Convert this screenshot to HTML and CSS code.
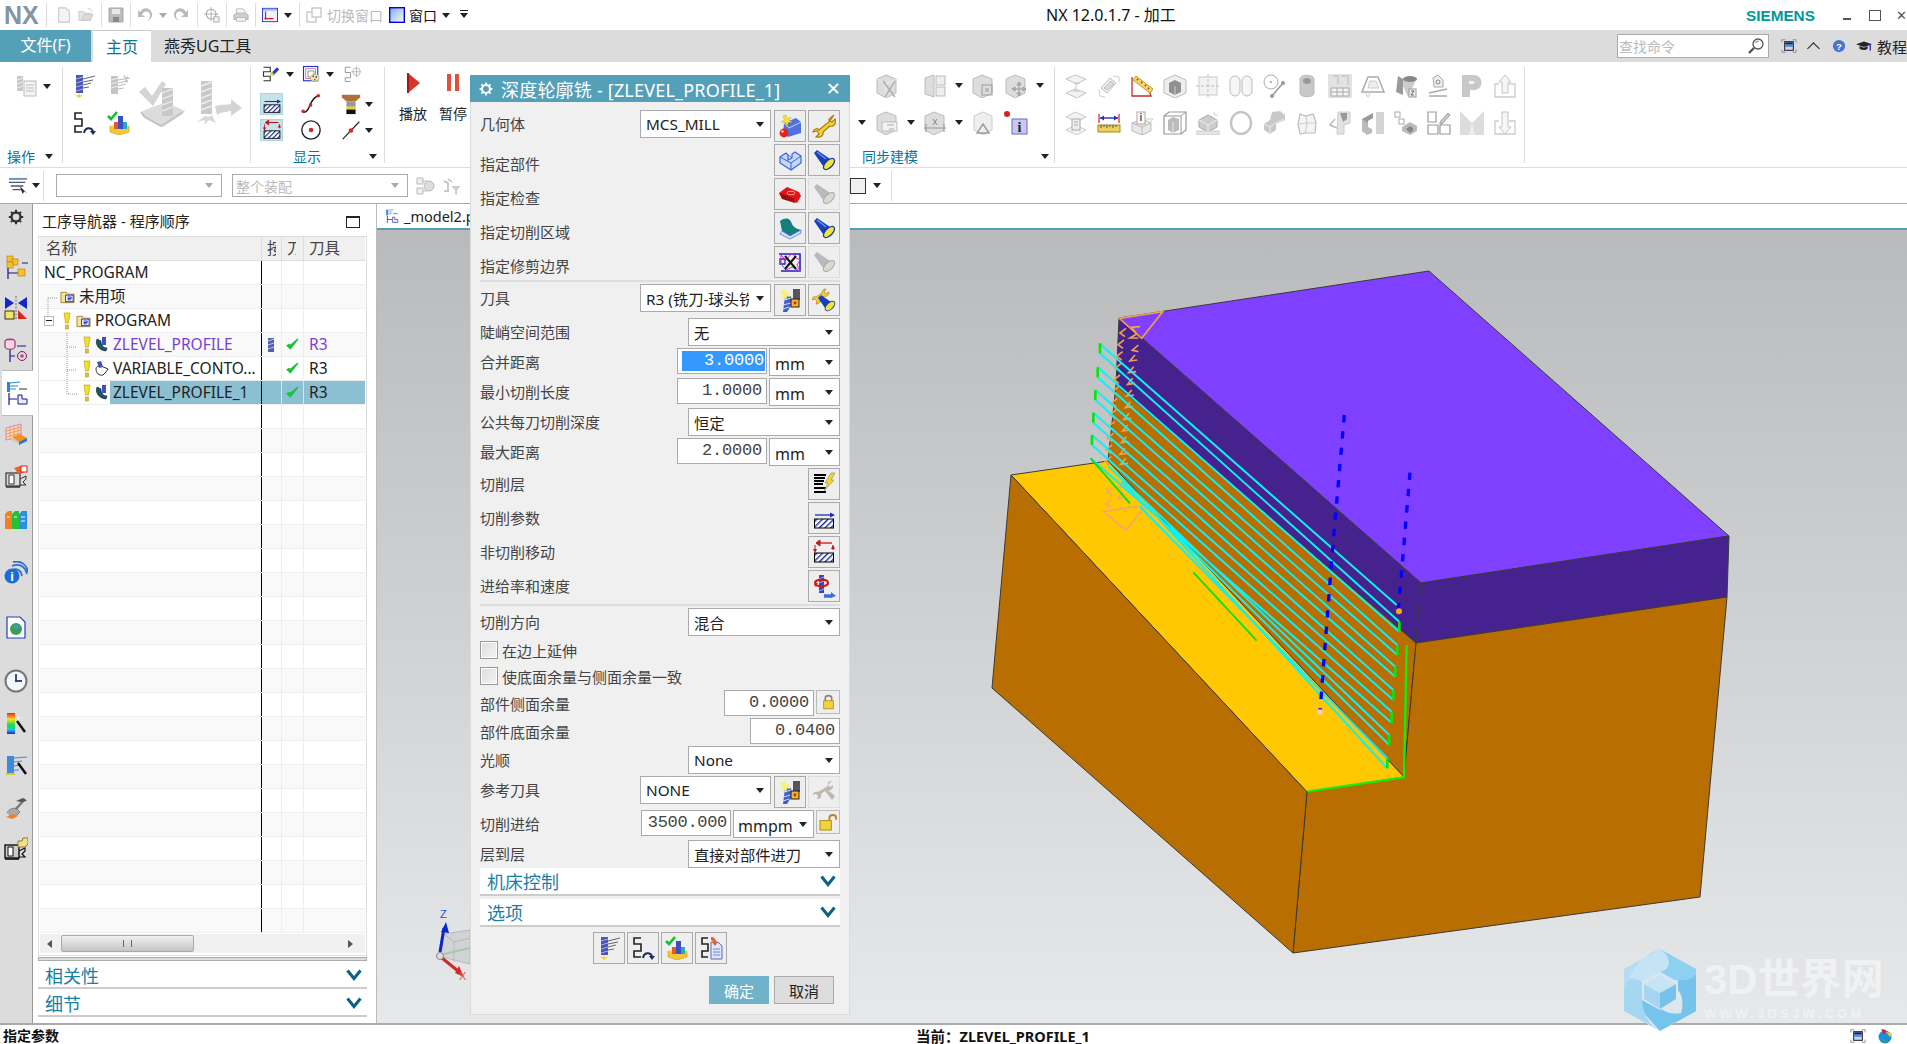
FILE: index.html
```html
<!DOCTYPE html>
<html lang="zh-CN">
<head>
<meta charset="utf-8">
<title>NX 12.0.1.7 - 加工</title>
<link rel="stylesheet" href="styles.css">
</head>
<body>
<svg class="defs" width="0" height="0" aria-hidden="true">
<defs>
<pattern id="hatch" width="4" height="4" patternUnits="userSpaceOnUse" patternTransform="rotate(45)"><rect width="4" height="4" fill="#fff"/><rect width="1.4" height="4" fill="#1c2a8c"/></pattern>
<symbol id="op" viewBox="0 0 24 24"><rect x="4" y="1" width="7" height="18" fill="#4a55b8"/><path d="M4 5l7-2M4 9l7-2M4 13l7-2M4 17l7-2" stroke="#a8b0f0"/><path d="M11 5L23 2M11 8l10-2M11 11l8-2M11 14l6-1" stroke="#666" fill="none"/><path d="M7 19l1.2 2.5L11 20l-1.7 2.4L7 24l-2-1.6L3 20l2.8 1.5z" fill="#f3d23a"/></symbol>
<symbol id="op-g" viewBox="0 0 24 24"><rect x="4" y="2" width="7" height="18" fill="#c4c4c4"/><path d="M4 6l7-2M4 10l7-2M4 14l7-2" stroke="#eee"/><path d="M11 6L23 4M11 9l10-2M11 12l8-2M11 15l6-1" stroke="#bbb"/><path d="M17 1l1 3 3-1-2 3 2 2-3-1" fill="#ddd" stroke="#bbb"/></symbol>
<symbol id="sarrow" viewBox="0 0 24 24"><path d="M10 2H3v6h7v7H3v6h7" fill="none" stroke="#222" stroke-width="1.6"/><path d="M12 22c1-6 7-6 9-2" fill="none" stroke="#1b2a5c" stroke-width="2"/><path d="M18 20h6l-3 4z" fill="#1b2a5c"/></symbol>
<symbol id="verify" viewBox="0 0 24 24"><path d="M3 15l9 4 10-4v6l-10 3-9-3z" fill="#f5c833" stroke="#c49a10" stroke-width=".6"/><path d="M3 15l9-3 10 3-10 4z" fill="#f8dc70"/><rect x="7" y="11" width="4" height="7" fill="#e35a2a"/><rect x="11" y="5" width="5" height="13" fill="#3a50c0"/><rect x="16" y="11" width="4" height="7" fill="#25a8c0"/><path d="M1 5l3 3 6-7" fill="none" stroke="#12c030" stroke-width="2.6"/></symbol>
<symbol id="copy" viewBox="0 0 24 24"><path d="M9 2H3v6h6v7H3v6h6" fill="none" stroke="#222" stroke-width="1.6"/><path d="M12 6h7l4 4v13H12z" fill="#dfe6fa" stroke="#5a6ab8"/><path d="M14 13h7M14 16h7M14 19h7" stroke="#7484c8"/><path d="M12 1c3 0 5 2 5 5h2l-3 4-3-4h1c0-1-1-2-2-2z" fill="#e8622a"/></symbol>
<symbol id="flash" viewBox="0 0 24 24"><path d="M2 5l3-3 13 9-7 7z" fill="#1a3fb8"/><path d="M5 4l9 7" stroke="#6f8ff0" stroke-width="1.5"/><ellipse cx="17" cy="16" rx="7" ry="3.6" transform="rotate(-45 17 16)" fill="#f2e23a" stroke="#123a9a" stroke-width="1.2"/></symbol>
<symbol id="flash-g" viewBox="0 0 24 24"><path d="M2 5l3-3 13 9-7 7z" fill="#b9b9be"/><ellipse cx="17" cy="16" rx="7" ry="3.6" transform="rotate(-45 17 16)" fill="#d9dbd0" stroke="#aaa"/></symbol>
<symbol id="geom" viewBox="0 0 24 24"><path d="M6 9l12-5 5 4v11l-13 4-5-4z" fill="#4f72e0"/><path d="M6 9l5 5 12-6" fill="none" stroke="#c7d6ff"/><path d="M8 1l1.5 4L13 3l-2 3.500 3 1.500-4 .5L9 13 7.500 8.500 3 8l3.500-2L5 2z" fill="#f7e33c" stroke="#d8a520" stroke-width=".5"/><circle cx="6" cy="19" r="4.400" fill="#e82018"/><circle cx="4.500" cy="17.500" r="1.200" fill="#ffd0b0"/></symbol>
<symbol id="wrench" viewBox="0 0 24 24"><path d="M22 1l-5 4v3l-3 2-7 6c-1-2-5-2-6 2l4-1 2 3-3 3c5 1 8-2 7-5l7-6c3 1 7-2 5-7l-3 3-2-1z" fill="#f5cf3a" stroke="#a9820d" stroke-width="1.200"/></symbol>
<symbol id="wrench-g" viewBox="0 0 24 24"><path d="M20 1c-3 0-5 2-4 5L6 12c-3-1-5 1-5 3l3-1 2 2-1 3c3 0 5-2 4-5l4-3 7 9 3-4-7-6c2 1 6-1 5-5l-3 2-2-2z" fill="#bdb9ae"/></symbol>
<symbol id="partcube" viewBox="0 0 24 24"><path d="M2 9l6-4 2 2v5l4-2V6l3-2 6 4v7l-10 7-11-7z" fill="#c5d6ff" stroke="#3a64d8" stroke-width="1.200"/><path d="M2 9l11 6 10-7M13 15v7M10 7l4 3" fill="none" stroke="#3a64d8"/></symbol>
<symbol id="checkred" viewBox="0 0 24 24"><path d="M1 11l8-6 12 5 2 4-4 7-13-4z" fill="#e5141a"/><path d="M1 11l3 6 13 4-1-5z" fill="#9c0e10"/><ellipse cx="13" cy="11" rx="4" ry="1.800" fill="none" stroke="#ffa0a0"/></symbol>
<symbol id="area" viewBox="0 0 24 24"><path d="M4 15L2 5c6-4 10-3 12 3 1 3 5 5 9 6l-11 6z" fill="#157f80"/><path d="M4 15l8 5 11-6v3l-11 6-10-5z" fill="#d8e0f8" stroke="#3a64d8" stroke-width=".7"/></symbol>
<symbol id="trim" viewBox="0 0 24 24"><path d="M1 4h21v17H3" fill="none" stroke="#1426c0" stroke-width="1.600"/><path d="M2 9h5v5H2z" fill="none" stroke="#1426c0" stroke-width="1.300"/><path d="M3 5l5 5 6-7 4 5 4 2-3 5 3 6-8-4-6 3-5-6z" fill="none" stroke="#e020d8"/><path d="M7 6l11 13M18 6L7 19" stroke="#111" stroke-width="2"/></symbol>
<symbol id="toolnew" viewBox="0 0 24 24"><path d="M7 8h6l1 8-5 8H5z" fill="#3f5fd0"/><path d="M5 12l9-2M5 17l8-2M5 21l6-2" stroke="#cfd8ff"/><rect x="15" y="1" width="7" height="11" fill="#55555f"/><rect x="13" y="11" width="8" height="8" fill="#f5b32a" stroke="#222"/><circle cx="17" cy="15" r="1.400" fill="#b31"/><path d="M7 1l1.500 4 4-1.500-2.500 3.500 3 2-4-.5L8 13 6.500 9 2 9.500 5 7 3 3z" fill="#fdf06a"/></symbol>
<symbol id="tooledit" viewBox="0 0 24 24"><path d="M14 1c-3 0-4 2-4 4L4 9C1 8 0 10 0 12l3-1 2 2-1 3c3 0 5-2 4-5l4-3c2 1 5 0 5-4l-3 2-2-2z" fill="#f5cf3a" stroke="#a9820d" stroke-width=".7"/><path d="M6 10l3-3 10 7-6 6z" fill="#1a3fb8"/><ellipse cx="18" cy="18" rx="6" ry="3.200" transform="rotate(-45 18 18)" fill="#f2e23a" stroke="#123a9a"/></symbol>
<symbol id="layers" viewBox="0 0 24 24"><path d="M2 3h12M2 6h11M2 9h10M2 12h9M2 16h12M2 20h12" stroke="#000" stroke-width="2"/><path d="M19 1h4l-4 7h3L12 19l4-8h-3z" fill="#f0d43a" stroke="#8a8a50" stroke-width=".6"/></symbol>
<symbol id="cutparam" viewBox="0 0 24 24"><path d="M3 9h17" stroke="#1c2ac0" stroke-width="1.300"/><path d="M23 9l-5-2.500v5z" fill="#1c2ac0"/><rect x="2.500" y="13" width="19" height="9" fill="url(#hatch)" stroke="#000"/></symbol>
<symbol id="noncut" viewBox="0 0 24 24"><path d="M5 3h15" stroke="#c01818" stroke-width="1.300"/><path d="M8 0v6l-4-3zM3 5v5M21 5v5" stroke="#c01818" fill="#c01818"/><path d="M1 9h4l-2 4zM19 9h4l-2-4z" fill="#c01818"/><rect x="2.500" y="13" width="19" height="9" fill="url(#hatch)" stroke="#000"/></symbol>
<symbol id="feed" viewBox="0 0 24 24"><rect x="7" y="1" width="5" height="18" fill="#3a46b8"/><path d="M7 5l5-2M7 9l5-2M7 13l5-2M7 17l5-2" stroke="#9aa6ee"/><path d="M3 9c0-4 13-5 13 0 0 4-11 4-13 1" fill="none" stroke="#d01818" stroke-width="2.200"/><path d="M2 8l4 1-3 4z" fill="#d01818"/><path d="M12 22h8" stroke="#3a6ee0" stroke-width="3.500"/><path d="M19 18l5 4-5 2z" fill="#3a6ee0"/></symbol>
<symbol id="lock" viewBox="0 0 16 20"><path d="M4 9V5c0-4 8-4 8 0v4" fill="none" stroke="#8c8470" stroke-width="2"/><rect x="2" y="8.500" width="12" height="10" fill="#f3d23a" stroke="#a88a1a"/></symbol>
<symbol id="unlock" viewBox="0 0 20 18"><path d="M11 7V4c0-4 7-4 7 0v2" fill="none" stroke="#b08a20" stroke-width="2"/><rect x="1" y="7" width="12" height="10" fill="#f3d23a" stroke="#a88a1a"/></symbol>
<symbol id="gear" viewBox="0 0 20 20"><circle cx="10" cy="10" r="5" fill="none" stroke="currentColor" stroke-width="2.600"/><path d="M10 2v3M10 15v3M2 10h3M15 10h3M4.300 4.300l2 2M13.700 13.700l2 2M4.300 15.700l2-2M13.700 6.300l2-2" stroke="currentColor" stroke-width="2.200"/></symbol>
<symbol id="docg" viewBox="0 0 24 24"><rect x="10" y="6" width="12" height="15" fill="#f4f4f4" stroke="#bbb"/><path d="M12 10h8M12 13h8M12 16h8" stroke="#bbb"/><rect x="3" y="1" width="6" height="15" fill="#c8c8c8"/><path d="M3 5l6-2M3 9l6-2M3 13l6-2" stroke="#eee"/></symbol>
<symbol id="bigcheck" viewBox="0 0 48 48"><path d="M1 12l6-5 7 9L24 1l4 3-13 22z" fill="#d4d4d4"/><path d="M3 32c8-4 18-8 26-9l18 8-4 4-18 12-20-10z" fill="#dcdcdc"/><path d="M3 32l4 5 16 9 22-14" fill="none" stroke="#c4c4c4" stroke-width="2"/><rect x="24" y="8" width="11" height="28" fill="#c8c8c8"/><path d="M24 13l11-4M24 19l11-4M24 25l11-4M24 31l11-4" stroke="#e6e6e6" stroke-width="1.500"/></symbol>
<symbol id="bigtool" viewBox="0 0 48 48"><rect x="6" y="1" width="11" height="33" fill="#c9c9c9"/><path d="M6 6l11-4M6 12l11-4M6 18l11-4M6 24l11-4M6 30l11-4" stroke="#ededed" stroke-width="1.500"/><path d="M2 42l8-6 4 1 3-2 4 8-7-3-5 5 1-5z" fill="#d8d8d8"/><path d="M20 26c6-2 12-1 16-2v-5l11 9-11 8v-5c-6 1-10 1-14 4z" fill="#d4d4d4"/></symbol>
<symbol id="scan" viewBox="0 0 24 24"><path d="M2 3h9v6H2v6h9v6H2" fill="none" stroke="#333" stroke-width="1.500"/><path d="M12 11l8-8 3 3-8 8z" fill="#2a3fb8"/><circle cx="13" cy="12" r="2.500" fill="#f3d23a"/></symbol>
<symbol id="palette" viewBox="0 0 24 24"><rect x="2" y="2" width="19" height="19" fill="none" stroke="#2030d0" stroke-width="1.500"/><rect x="5" y="5" width="13" height="13" fill="none" stroke="#e040c0"/><rect x="8" y="8" width="8" height="8" fill="none" stroke="#20a040"/><ellipse cx="17" cy="17" rx="6" ry="5" fill="#efe1b8" stroke="#a08040" stroke-width=".6"/><circle cx="15" cy="15" r="1.200" fill="#d82020"/><circle cx="19" cy="16" r="1.200" fill="#2060d8"/><circle cx="17" cy="19.500" r="1.200" fill="#20a040"/></symbol>
<symbol id="scang" viewBox="0 0 24 24"><path d="M10 3H3v7h7v7H3v5h7" fill="none" stroke="#999" stroke-width="1.300"/><circle cx="18" cy="9" r="5" fill="none" stroke="#aaa"/><path d="M18 2v14M11 9h13" stroke="#aaa"/></symbol>
<symbol id="curve" viewBox="0 0 24 24"><path d="M3 21C12 22 9 6 20 3" fill="none" stroke="#111" stroke-width="1.500"/><circle cx="3.500" cy="20" r="2" fill="#d82828"/><circle cx="11.500" cy="13" r="2" fill="#d82828"/><circle cx="20" cy="3" r="2" fill="#d82828"/></symbol>
<symbol id="toolhold" viewBox="0 0 24 24"><path d="M2 2h20v3l-5 4H7L2 5z" fill="#b0703a"/><rect x="7" y="9" width="10" height="6" fill="#999"/><rect x="7" y="15" width="10" height="3" fill="#f0d020"/><rect x="7" y="18" width="10" height="5" fill="#111"/></symbol>
<symbol id="circ" viewBox="0 0 24 24"><circle cx="12" cy="12" r="10" fill="none" stroke="#222" stroke-width="1.500"/><circle cx="12" cy="12" r="2.500" fill="#d82828"/></symbol>
<symbol id="line" viewBox="0 0 24 24"><path d="M3 22L21 3" stroke="#222" stroke-width="1.300"/><circle cx="12" cy="12.500" r="2.500" fill="#d82828"/></symbol>
<symbol id="newg" viewBox="0 0 16 18"><path d="M2 1h8l4 4v12H2z" fill="#f4f4f4" stroke="#c8c8c8" stroke-width="1.200"/></symbol>
<symbol id="openg" viewBox="0 0 18 16"><path d="M1 4h5l2 2h6v8H1z" fill="#e4e4e4" stroke="#c8c8c8"/><path d="M4 14l3-7h10l-3 7z" fill="#dadada" stroke="#c8c8c8"/><path d="M11 1c3 0 4 1 5 3" stroke="#c0c0c0" fill="none"/></symbol>
<symbol id="saveg" viewBox="0 0 16 16"><path d="M1 1h14v14H1z" fill="#bdbdbd" stroke="#a8a8a8"/><rect x="4" y="2" width="8" height="5" fill="#e8e8e8"/><rect x="5" y="10" width="6" height="5" fill="#888"/></symbol>
<symbol id="undog" viewBox="0 0 16 16"><path d="M5 9C5 3 14 3 13 9c0 2-2 4-3 5 5-2 7-7 3-11C10 0 5 1 3 5L1 3v7h7L6 8z" fill="#bbb"/></symbol>
<symbol id="redog" viewBox="0 0 16 16"><path d="M11 9C11 3 2 3 3 9c0 2 2 4 3 5-5-2-7-7-3-11 3-3 8-2 10 2l2-2v7H8l2-2z" fill="#bbb"/></symbol>
<symbol id="crossg" viewBox="0 0 18 18"><circle cx="8" cy="8" r="5.500" fill="none" stroke="#aaa" stroke-width="1.300"/><path d="M8 0v16M0 8h16" stroke="#aaa"/><path d="M11 11h6v6h-6z" fill="#eee" stroke="#aaa"/></symbol>
<symbol id="printg" viewBox="0 0 18 16"><path d="M4 1h7l3 3v4H4z" fill="#f2f2f2" stroke="#bbb"/><path d="M1 8l3-2h10l3 2v5H1z" fill="#d0d0d0" stroke="#b0b0b0"/><rect x="4" y="11" width="10" height="4" fill="#f2f2f2" stroke="#bbb"/></symbol>
<symbol id="csys" viewBox="0 0 18 16"><rect x=".5" y=".5" width="17" height="15" fill="#eef2ff" stroke="#1c2ad0"/><rect x="1" y="1" width="16" height="2" fill="#9cb4f0"/><path d="M4 4v8h9" fill="none" stroke="#d02020" stroke-width="1.300"/><circle cx="4" cy="12" r="1.300" fill="#d02020"/></symbol>
<symbol id="swg" viewBox="0 0 16 16"><rect x="1" y="5" width="9" height="10" fill="#fff" stroke="#c4c4c4" stroke-width="1.300"/><rect x="6" y="1" width="9" height="9" fill="#fff" stroke="#c4c4c4" stroke-width="1.300"/></symbol>
<symbol id="winic" viewBox="0 0 16 16"><defs><linearGradient id="wg" x1="0" y1="0" x2="1" y2="1"><stop offset="0" stop-color="#7fa8e0"/><stop offset="1" stop-color="#fff"/></linearGradient></defs><rect x=".7" y=".7" width="14.600" height="14.600" fill="url(#wg)" stroke="#0000e0" stroke-width="1.400"/></symbol>
<symbol id="filt" viewBox="0 0 20 20"><path d="M2 5l4 2v8M6 3l4 3M2 15h5" stroke="#bbb" fill="none" stroke-width="1.500"/><path d="M9 10h10l-4 4v5l-2-1v-4z" fill="#ccc"/></symbol>
<symbol id="assem" viewBox="0 0 20 20"><path d="M2 2h6v6H2zM2 12h6v6H2zM8 5h4M8 15h4" fill="#eee" stroke="#bbb"/><circle cx="14" cy="10" r="5" fill="#ddd" stroke="#bbb"/></symbol>
<symbol id="selico" viewBox="0 0 22 20"><path d="M1 2h20M1 6h18M3 10h14M5 14h10" stroke="#556" stroke-width="1.500"/><path d="M1 2h14" stroke="#7090d0" stroke-width="2"/><path d="M13 10l3 9 2-3 3 2z" fill="#333"/></symbol>
<symbol id="search" viewBox="0 0 16 16"><circle cx="10" cy="6" r="5" fill="#fff" stroke="#555" stroke-width="1.300"/><path d="M6 10l-5 5" stroke="#555" stroke-width="2.400"/><path d="M7 5c1-2 3-2 4-2" stroke="#aaa"/></symbol>
<symbol id="fs" viewBox="0 0 18 16"><path d="M1 4V1h4M13 1h4v3M1 12v3h4M13 15h4v-3" fill="none" stroke="#888"/><rect x="4" y="3" width="10" height="10" fill="#5d8ad8" stroke="#333"/><rect x="5" y="4" width="8" height="2" fill="#223"/><rect x="5" y="9" width="8" height="3" fill="#c8d8f0"/></symbol>
<symbol id="help" viewBox="0 0 16 16"><circle cx="8" cy="8" r="7" fill="#4a72d0"/><text x="8" y="12" class="help-t">?</text></symbol>
<symbol id="hat" viewBox="0 0 18 14"><path d="M0 5l9-3 9 3-9 3z" fill="#222"/><path d="M4 7v3c3 2 7 2 9 0V7L9 9z" fill="#222"/><path d="M16 5v7" stroke="#1c2ad0" stroke-width="1.500"/></symbol>
<symbol id="folder" viewBox="0 0 16 14"><path d="M1 2h6l1 2h7v9H1z" fill="#f5e39a" stroke="#9c8a3a"/><rect x="6" y="5" width="8" height="7" fill="#fff" stroke="#1c2ad0"/><path d="M8 7h4v1.500H8.500V10H12" fill="none" stroke="#1c2ad0"/></symbol>
<symbol id="bulb" viewBox="0 0 8 18"><path d="M1 1h6L5.500 11h-3z" fill="#f6e020" stroke="#b09a10" stroke-width=".6"/><rect x="2.500" y="13" width="3" height="4" fill="#e6c800" stroke="#888" stroke-width=".5"/></symbol>
<symbol id="opz" viewBox="0 0 14 16"><path d="M2 2c-2 5 1 11 9 12l1-3c-4 0-6-3-6-7z" fill="#18586a" stroke="#111" stroke-width=".6"/><rect x="7" y="0" width="4" height="8" fill="#3c50c8"/></symbol>
<symbol id="opv" viewBox="0 0 14 16"><path d="M1 8c0-3 3-3 5-3l7 3-2 3-3 3c-4 1-7-2-7-6z" fill="#fff" stroke="#333"/><path d="M2 1l4-1 2 6-4 1z" fill="#3c50c8"/></symbol>
<symbol id="opico" viewBox="0 0 8 14"><rect width="6" height="14" fill="#5060b8"/><path d="M0 3l6-2M0 7l6-2M0 11l6-2" stroke="#bcc4f0"/></symbol>
<symbol id="ok" viewBox="0 0 12 12"><path d="M1 7l3 3 7-9-7 6-1-1z" fill="#10c838" stroke="#10c838" stroke-width="1.200"/></symbol>
<symbol id="r-geo" viewBox="0 0 24 24"><rect x="3" y="1" width="6" height="6" fill="#f5c02a" stroke="#b07a10" stroke-width=".6"/><rect x="8" y="4" width="6" height="6" fill="#f5c02a" stroke="#b07a10" stroke-width=".6"/><rect x="3" y="7" width="6" height="6" fill="#f5c02a" stroke="#b07a10" stroke-width=".6"/><path d="M4 13v11M4 18h10M18 8h6" stroke="#14148c" stroke-width="1.200"/><rect x="14" y="14" width="7" height="7" fill="#f5c02a" stroke="#b07a10" stroke-width=".6"/></symbol>
<symbol id="r-bow" viewBox="0 0 24 24"><path d="M1 1l9 6-9 6zM23 1l-9 6 9 6z" fill="#1426c8"/><path d="M12 0v24" stroke="#666" stroke-dasharray="2 1.500"/><rect x="1" y="15" width="9" height="8" fill="#f5e65a" stroke="#333"/><path d="M14 14v9h9z" fill="#d8261a"/></symbol>
<symbol id="r-disc" viewBox="0 0 24 24"><ellipse cx="6" cy="3" rx="5" ry="2" fill="#f0a0c0" stroke="#8a1a5a"/><path d="M1 3v6c0 3 10 3 10 0V3" fill="#fbd8e0" stroke="#8a1a5a"/><path d="M6 12v12M6 18h5M13 8h9" stroke="#14148c" stroke-width="1.200"/><circle cx="18" cy="18" r="4.500" fill="none" stroke="#8a1a5a"/><circle cx="18" cy="18" r="1.800" fill="#c0409a"/></symbol>
<symbol id="r-ops" viewBox="0 0 24 24"><rect x="2" y="1" width="3" height="10" fill="#2a86d0"/><path d="M5 2l10-1M5 5l8 0M5 8l6 0" stroke="#2a86d0"/><path d="M14 8h8" stroke="#333"/><path d="M4 12v12M4 18h8" stroke="#14148c" stroke-width="1.200"/><path d="M13 14h4v4h5v5h-9z" fill="#e8f0ff" stroke="#14148c"/></symbol>
<symbol id="r-mesh" viewBox="0 0 24 24"><path d="M2 5l15-4v13L2 17z" fill="#f8ddb8" stroke="#c85ae0" stroke-width=".7"/><path d="M2 8l15-4M2 11l15-4M2 14l15-4M6 4v12M10 3v12M14 2v12" stroke="#e88848" stroke-width=".7"/><path d="M8 14l8-3 7 4-8 5z" fill="#f29020"/><path d="M8 14v4l7 3v-2z" fill="#ccc"/><path d="M15 19l8-4v3l-8 4z" fill="#2a72d0"/></symbol>
<symbol id="r-mach" viewBox="0 0 24 24"><rect x="2" y="8" width="14" height="13" fill="#ddd" stroke="#333" stroke-width="1.200"/><rect x="5" y="10" width="5" height="9" fill="#fff" stroke="#333"/><path d="M16 14l6-3v3l-3 3 3 3h-6" fill="none" stroke="#333"/><path d="M2 22h14" stroke="#333" stroke-width="1.500"/><path d="M10 3l6-2 5 2v4l-5 2-3-2" fill="#f06020"/><rect x="17" y="1" width="6" height="6" fill="#fff" stroke="#d82020"/></symbol>
<symbol id="r-mach2" viewBox="0 0 24 24"><rect x="1" y="8" width="14" height="13" fill="#ccc" stroke="#111" stroke-width="1.400"/><rect x="4" y="10" width="5" height="9" fill="#fff" stroke="#111"/><path d="M15 14l6-3v3l-3 3 3 3h-6" fill="none" stroke="#111" stroke-width="1.200"/><path d="M1 22h14" stroke="#111" stroke-width="1.600"/><path d="M14 4h4l1-3h5v6l-3 3h-7z" fill="#f2e08a" stroke="#8a7a30"/></symbol>
<symbol id="r-books" viewBox="0 0 24 24"><path d="M1 6l3-3h4v18H1z" fill="#f08020"/><path d="M8 6l3-3h4v18H8z" fill="#24c038"/><path d="M15 6l3-3h5v18h-8z" fill="#2a90e0"/><path d="M17 9h4M17 13h4M10 9h3M3 9h3" stroke="#fff"/></symbol>
<symbol id="r-info" viewBox="0 0 24 24"><path d="M8 9c5-2 9 0 10 6M8 5c7-3 13 0 15 8M9 1c8-2 14 3 15 10" fill="none" stroke="#2a70d0" stroke-width="1.800"/><circle cx="8" cy="15" r="7.500" fill="#1c6cd8"/><text x="8" y="19.500" class="info-t">i</text></symbol>
<symbol id="r-doc" viewBox="0 0 24 24"><path d="M3 2h13l5 5v16H3z" fill="#fff" stroke="#2040c0" stroke-width="1.200"/><circle cx="12" cy="14" r="6" fill="#38a050"/><path d="M8 12a5 5 0 0 1 8 0l-3 2z" fill="#4a8ee0"/></symbol>
<symbol id="r-clock" viewBox="0 0 24 24"><circle cx="12" cy="12" r="10.500" fill="#f2f6ff" stroke="#777" stroke-width="2"/><path d="M12 5v7h6" fill="none" stroke="#111" stroke-width="1.400"/><circle cx="12" cy="12" r="1.200" fill="#2040c0"/></symbol>
<symbol id="r-rain" viewBox="0 0 24 24"><defs><linearGradient id="rb" x1="0" y1="0" x2="0" y2="1"><stop offset="0" stop-color="#f02020"/><stop offset=".3" stop-color="#f8e020"/><stop offset=".55" stop-color="#20e040"/><stop offset=".8" stop-color="#20c0e0"/><stop offset="1" stop-color="#1a20e0"/></linearGradient></defs><rect x="3" y="1" width="8" height="21" fill="url(#rb)"/><path d="M13 9l8 11" stroke="#111" stroke-width="2.500"/><path d="M13 2l1 3 3-1-2 3 2 2-3-1" fill="#fff" stroke="#ddd"/></symbol>
<symbol id="r-wand" viewBox="0 0 24 24"><rect x="3" y="2" width="7" height="17" fill="#3f8ad8"/><path d="M10 4l13-1M10 8l8-1M10 12l6-1M10 16l5 0" stroke="#3f8ad8"/><path d="M14 9l8 11" stroke="#111" stroke-width="2.500"/><path d="M2 20h9" stroke="#e0c820" stroke-width="2"/></symbol>
<symbol id="r-tools" viewBox="0 0 24 24"><path d="M21 3L11 14" stroke="#777" stroke-width="2.500"/><path d="M12 5l7-3 4 3-6 1z" fill="#555"/><path d="M3 17c2-4 6-6 10-4l3 3c-3 4-8 6-11 3" fill="#aaa" stroke="#555" stroke-width=".6"/><path d="M2 21l8-3 4 2-6 3z" fill="#f08020"/></symbol>
<symbol id="x1" viewBox="0 0 24 24"><path d="M2 5l9-4 11 4-9 5z M2 19l9-4 11 4-9 5z" fill="#f2f2f2" stroke="#c4c4c4"/><path d="M12 9v8M9 9h7M9 17h7" stroke="#c4c4c4"/></symbol>
<symbol id="x2" viewBox="0 0 24 24"><path d="M4 14l9-10 6 5-9 10z" fill="#f2f2f2" stroke="#bbb"/><path d="M7 14l7-7 3 3-7 6z" fill="#ddd" stroke="#bbb"/><path d="M16 2l6 1v5M2 16l1 6 5 1" fill="none" stroke="#ccc"/></symbol>
<symbol id="x3" viewBox="0 0 24 24"><path d="M2 3v19h19A18 18 0 0 0 11 10" fill="none" stroke="#c03030" stroke-width="1.300"/><path d="M6 2l17 13-3 4L3 6z" fill="#f3d868" stroke="#c0a020"/><path d="M7 5l1 1M11 8l1 1M15 11l1 1M18 14l1 1" stroke="#d02050" stroke-width="1.800"/></symbol>
<symbol id="x4" viewBox="0 0 24 24"><path d="M1 6l11-5 11 5v13l-11 5-11-5z" fill="#eee" stroke="#bbb"/><path d="M6 9l6-3 6 3v9l-6 3-6-3z" fill="#909090"/><path d="M12 12v9" stroke="#ccc"/></symbol>
<symbol id="x5" viewBox="0 0 24 24"><rect x="3" y="3" width="18" height="18" fill="#f2f2f2" stroke="#ccc"/><path d="M12 0v24M0 12h24" stroke="#bbb" stroke-dasharray="3 2"/></symbol>
<symbol id="x6" viewBox="0 0 24 24"><rect x="1" y="2" width="10" height="20" rx="5" fill="#f6f6f6" stroke="#bbb"/><rect x="13" y="2" width="10" height="20" rx="5" fill="#f6f6f6" stroke="#bbb"/></symbol>
<symbol id="x7" viewBox="0 0 24 24"><circle cx="9" cy="8" r="7" fill="#fff" stroke="#aaa"/><circle cx="9" cy="8" r="1" fill="#999"/><path d="M21 9L10 22" stroke="#999" stroke-width="1.500"/><circle cx="21" cy="9" r="2" fill="#999"/><circle cx="10" cy="22" r="2" fill="#999"/></symbol>
<symbol id="x8" viewBox="0 0 24 24"><path d="M5 5c0-5 14-5 14 0v14c0 5-14 5-14 0z" fill="#c8c8c8" stroke="#bbb"/><ellipse cx="12" cy="7" rx="4" ry="3" fill="#999"/></symbol>
<symbol id="x9" viewBox="0 0 24 24"><rect width="24" height="24" fill="#e2e2e2"/><path d="M3 14h18v8H3zM3 18h18M9 14v8M15 14v8" fill="#f2f2f2" stroke="#aaa"/><path d="M5 2h5v8M13 2h7v9" stroke="#bbb" fill="none"/></symbol>
<symbol id="x10" viewBox="0 0 24 24"><path d="M7 3h10l6 15H1z" fill="none" stroke="#aaa" stroke-width="1.500"/><path d="M9 7h6l3 7H7z" fill="#eee" stroke="#ccc"/><path d="M4 18l3 5 4-7" fill="none" stroke="#ccc"/></symbol>
<symbol id="x11" viewBox="0 0 24 24"><path d="M4 2l5 3v16L2 18z" fill="#999"/><path d="M9 4h14L14 23 9 12z" fill="#ccc"/><ellipse cx="16" cy="5" rx="7" ry="3" fill="#888"/><rect x="15" y="15" width="7" height="8" fill="#eee" stroke="#999"/><path d="M17 17h3l-3 4h3" fill="none" stroke="#666"/></symbol>
<symbol id="x12" viewBox="0 0 24 24"><path d="M6 4l5-3 5 5v7H7z" fill="#eee" stroke="#aaa"/><circle cx="11" cy="8" r="2" fill="none" stroke="#888"/><path d="M2 19l18-4M2 22h18" stroke="#aaa" stroke-width="1.500"/></symbol>
<symbol id="x13" viewBox="0 0 24 24"><path d="M2 1h12c10 0 10 15 0 15H10v7H2z" fill="#c8c8c8"/><path d="M9 7h4c2 0 2 3 0 3H9z" fill="#f4f4f4"/></symbol>
<symbol id="x14" viewBox="0 0 24 24"><path d="M8 23H2V10h4M16 10h6v13h-6M8 23h8" fill="none" stroke="#ccc" stroke-width="1.300"/><path d="M12 1l6 7h-3v11H9V8H6z" fill="#f6f6f6" stroke="#c4c4c4"/></symbol>
<symbol id="y1" viewBox="0 0 24 24"><path d="M2 6l9-5 11 5-9 5zM2 19l9-5 11 5-9 5z" fill="#f2f2f2" stroke="#ccc"/><rect x="8" y="8" width="8" height="11" fill="#eee" stroke="#aaa"/><path d="M10 11h4M10 14h4" stroke="#aaa"/></symbol>
<symbol id="y2" viewBox="0 0 24 24"><path d="M2 3v9M22 3v9" stroke="#d02020" stroke-width="1.200"/><path d="M3 7h18" stroke="#2030c0" stroke-width="1.400"/><path d="M3 7l4-2.500v5zM21 7l-4-2.500v5z" fill="#2030c0"/><rect x="1" y="14" width="22" height="7" fill="#ecd060" stroke="#a08a20"/><path d="M4 14v3M7 14v2M10 14v3M13 14v2M16 14v3M19 14v2" stroke="#555"/></symbol>
<symbol id="y3" viewBox="0 0 24 24"><path d="M2 12l10-4 9 4v8l-9 4-10-4z" fill="#e8e8e8" stroke="#bbb"/><path d="M2 12l10 4 9-4M12 16v8" fill="none" stroke="#bbb"/><rect x="7" y="1" width="8" height="12" fill="#fff" stroke="#aaa"/><text x="11" y="10" class="y3-t">i</text><path d="M16 8h7l-4 5" stroke="#ccc" fill="none"/></symbol>
<symbol id="y4" viewBox="0 0 24 24"><path d="M1 5l5-4h17v18l-5 4H1z" fill="none" stroke="#999" stroke-width="1.200"/><path d="M1 5h17v18M18 5l5-4" fill="none" stroke="#999"/><path d="M5 9l5-3 6 2v11l-6 3-5-3z" fill="#bbb"/><path d="M10 11v11" stroke="#eee"/></symbol>
<symbol id="y5" viewBox="0 0 24 24"><path d="M3 9l9-5 9 5v7l-9 5-9-5z" fill="#ccc" stroke="#aaa"/><path d="M3 9l9 5 9-5M12 14v7" fill="none" stroke="#eee"/><path d="M18 1l1 3 3 0" stroke="#ccc" fill="none"/><rect x="1" y="20" width="22" height="4" fill="#e6e6e6" stroke="#ccc"/></symbol>
<symbol id="y6" viewBox="0 0 24 24"><ellipse cx="12" cy="12" rx="10" ry="11" fill="none" stroke="#c4c4c4" stroke-width="2.400"/></symbol>
<symbol id="y7" viewBox="0 0 24 24"><path d="M2 13l6-4 2-8 8-1 5 4v5l-9 4v6l-6 4-6-4z" fill="#c8c8c8"/><path d="M12 13l10-5" stroke="#eee"/><path d="M2 13l6 3 4-3M8 16v8" fill="none" stroke="#eee"/></symbol>
<symbol id="y8" viewBox="0 0 24 24"><path d="M5 3l6 2 7-2 3 8-1 11H10l-5 1-2-10z" fill="#f4f4f4" stroke="#bbb" stroke-width="1.200"/><path d="M11 5l1 8-2 9M4 13l8-1 8 0" fill="none" stroke="#ccc"/></symbol>
<symbol id="y9" viewBox="0 0 24 24"><path d="M10 1h12v11l-6 2v9H9z" fill="#e2e2e2" stroke="#ccc"/><path d="M12 2h7v6l-4 3z" fill="#999"/><path d="M7 8l-5 6 7 3M2 14l3 2" stroke="#bbb" fill="none" stroke-width="1.500"/></symbol>
<symbol id="y10" viewBox="0 0 24 24"><path d="M1 8l11-6 0 5-5 3v4l-2 1v4l-3 2z" fill="#999"/><path d="M1 8l6 4v4l4 2v4l-5 2L1 20z" fill="#bbb"/><rect x="15" y="1" width="8" height="22" fill="#d4d4d4"/></symbol>
<symbol id="y11" viewBox="0 0 24 24"><rect x="1" y="1" width="5" height="5" fill="#fff" stroke="#aaa"/><rect x="5" y="8" width="5" height="5" fill="#fff" stroke="#aaa"/><path d="M8 16l8-5 7 4v5l-7 4-8-4z" fill="#bbb"/><path d="M12 18l4-3 3 2v3l-3 2" fill="#888"/></symbol>
<symbol id="y12" viewBox="0 0 24 24"><path d="M1 1h8v10H1zM1 14h10v9H1zM13 14h10v9H13z" fill="#fff" stroke="#999" stroke-width="1.200"/><path d="M13 11l8-9 2 2-8 9h-2z" fill="#ccc" stroke="#999"/></symbol>
<symbol id="y13" viewBox="0 0 24 24"><path d="M0 0l12 12L24 0v24H0z" fill="#dcdcdc"/><path d="M9 24l3-12 3 12z" fill="#ededed"/></symbol>
<symbol id="y14" viewBox="0 0 24 24"><path d="M8 23H2V10h4M16 10h6v13h-6M8 23h8" fill="none" stroke="#ccc" stroke-width="1.300"/><path d="M12 23l6-7h-3V1H9v15H6z" fill="#f6f6f6" stroke="#c4c4c4"/></symbol>
<symbol id="z1" viewBox="0 0 24 24"><path d="M2 5l9-4 10 4v14l-10 5-9-5z" fill="#ddd" stroke="#bbb"/><path d="M2 5l9 5 10-5M11 10v14" fill="none" stroke="#eee"/><path d="M8 7l12 16M20 7L10 23" stroke="#aaa" stroke-width="1.400"/></symbol>
<symbol id="z2" viewBox="0 0 24 24"><path d="M2 4l9-3v22l-9-3z" fill="#ddd" stroke="#bbb"/><rect x="13" y="2" width="9" height="9" fill="#eee" stroke="#bbb"/><rect x="13" y="13" width="9" height="9" fill="#eee" stroke="#bbb"/></symbol>
<symbol id="z3" viewBox="0 0 24 24"><path d="M2 5l9-4 10 4v14l-10 5-9-5z" fill="#ddd" stroke="#bbb"/><rect x="11" y="11" width="10" height="10" fill="none" stroke="#999"/><rect x="14" y="14" width="4" height="4" fill="#bbb"/></symbol>
<symbol id="z4" viewBox="0 0 24 24"><path d="M2 5l9-4 10 4v14l-10 5-9-5z" fill="#ddd" stroke="#bbb"/><path d="M15 8v14M8 15h14M15 8l-2 3h4zM15 22l-2-3h4zM8 15l3-2v4zM22 15l-3-2v4z" stroke="#999" fill="#eee"/></symbol>
<symbol id="z5" viewBox="0 0 24 24"><path d="M2 5l9-4 10 4v14l-10 5-9-5z" fill="#ddd" stroke="#bbb"/><rect x="7" y="11" width="15" height="9" fill="#f2f2f2" stroke="#bbb"/><path d="M12 14h7M14 18h5" stroke="#aaa"/></symbol>
<symbol id="z6" viewBox="0 0 24 24"><path d="M2 5l9-4 10 4v14l-10 5-9-5z" fill="#ddd" stroke="#bbb"/><path d="M1 17h22M3 13v8M21 13v8" stroke="#999"/><path d="M10 8l4 6M14 8l-4 6" stroke="#888"/></symbol>
<symbol id="z7" viewBox="0 0 24 24"><path d="M3 5l9-4 9 4v14l-9 5-9-5z" fill="#eee" stroke="#ccc"/><path d="M12 13l6 9H6z" fill="none" stroke="#999" stroke-width="1.400"/></symbol>
<symbol id="z8" viewBox="0 0 24 24"><circle cx="3" cy="3" r="3" fill="#d82020"/><rect x="8" y="8" width="15" height="15" fill="#c8c8f0" stroke="#6a6ac0"/><text x="15.500" y="21" class="z8-t">i</text></symbol>
<symbol id="play" viewBox="0 0 14 20"><path d="M2 0l12 10L2 20z" fill="#d8342a"/><path d="M2 0v20" stroke="#a01818" stroke-width="2"/></symbol>
<symbol id="pause" viewBox="0 0 14 20"><rect x="1" y="1" width="4" height="17" fill="#e0503f"/><rect x="9" y="1" width="4" height="17" fill="#e0503f"/></symbol>
<symbol id="chev" viewBox="0 0 16 12"><path d="M1.500 1.500L8 9.500l6.500-8" fill="none" stroke="#0a6480" stroke-width="3"/></symbol>
</defs>
</svg>

<div class="app">
  <header class="titlebar">
    <div class="quick">
      <div class="q-logo">NX</div>
      <div class="qg qg-a"><svg class="i16"><use href="#newg"/></svg><svg class="i16"><use href="#openg"/></svg></div>
      <div class="qg qg-b"><svg class="i16"><use href="#saveg"/></svg></div>
      <div class="qg qg-c"><svg class="i16"><use href="#undog"/></svg><i class="car car-g"></i><svg class="i16"><use href="#redog"/></svg></div>
      <div class="qg qg-b"><svg class="i16"><use href="#crossg"/></svg></div>
      <div class="qg qg-b"><svg class="i16"><use href="#printg"/></svg></div>
      <div class="qg qg-f"><svg class="i16"><use href="#csys"/></svg><i class="car"></i></div>
      <div class="qg qg-g">
        <svg class="i16"><use href="#swg"/></svg><span class="q-dim">切换窗口</span>
        <svg class="i16 q-win"><use href="#winic"/></svg><span class="q-txt">窗口</span><i class="car"></i><i class="car car-bar"></i>
      </div>
    </div>
    <div class="apptitle">NX 12.0.1.7 - 加工</div>
    <div class="win">
      <span class="siemens">SIEMENS</span>
      <i class="w-min"></i><i class="w-max"></i><span class="w-close">✕</span>
    </div>
  </header>

  <nav class="tabs">
    <div class="tab-file">文件(F)</div>
    <div class="tab-on">主页</div>
    <div class="tab-off">燕秀UG工具</div>
    <div class="tabs-r">
      <div class="search"><span>查找命令</span><svg class="i16"><use href="#search"/></svg></div>
      <svg class="i16 tr1"><use href="#fs"/></svg>
      <span class="collapse"></span>
      <svg class="i14 tr2"><use href="#help"/></svg>
      <svg class="i16 tr3"><use href="#hat"/></svg>
      <span class="tut">教程</span>
    </div>
  </nav>

  <section class="ribbon">
    <div class="grp g1">
      <div class="g-body"><svg class="i24"><use href="#docg"/></svg><i class="car"></i></div>
      <div class="g-lab"><span>操作</span><i class="car"></i></div>
    </div>
    <div class="grp g2">
      <div class="g2-small">
        <svg class="i24"><use href="#op"/></svg><svg class="i24"><use href="#op-g"/></svg>
        <svg class="i24"><use href="#sarrow"/></svg><svg class="i24"><use href="#verify"/></svg>
      </div>
      <svg class="i48 big1"><use href="#bigcheck"/></svg>
      <svg class="i48 big2"><use href="#bigtool"/></svg>
    </div>
    <div class="grp g3">
      <div class="g3-grid">
        <div class="c ca"><svg class="i18 r1a"><use href="#scan"/></svg><i class="car"></i></div>
        <div class="c cb"><svg class="i18 r1b"><use href="#palette"/></svg><i class="car"></i></div>
        <div class="c cc"><svg class="i18 r1c"><use href="#scang"/></svg></div>
        <div class="c ca"><span class="sel-ic"><svg class="i20"><use href="#cutparam"/></svg></span></div>
        <div class="c cb"><svg class="i22"><use href="#curve"/></svg></div>
        <div class="c cc"><svg class="i22"><use href="#toolhold"/></svg><i class="car"></i></div>
        <div class="c ca"><span class="sel-ic"><svg class="i20"><use href="#noncut"/></svg></span></div>
        <div class="c cb"><svg class="i22"><use href="#circ"/></svg></div>
        <div class="c cc"><svg class="i22"><use href="#line"/></svg><i class="car"></i></div>
      </div>
      <div class="g-lab g3-lab"><span>显示</span><i class="car"></i></div>
    </div>
    <div class="grp g4">
      <div class="pbtn"><svg class="i-play"><use href="#play"/></svg><span>播放</span></div>
      <div class="pbtn"><svg class="i-play"><use href="#pause"/></svg><span>暂停</span></div>
      <div class="sync">
        <div class="sync-grid">
          <b></b><svg class="i24"><use href="#z1"/></svg><b></b><svg class="i24"><use href="#z2"/></svg><i class="car"></i><svg class="i24"><use href="#z3"/></svg><svg class="i24"><use href="#z4"/></svg><i class="car"></i>
          <i class="car"></i><svg class="i24"><use href="#z5"/></svg><i class="car"></i><svg class="i24"><use href="#z6"/></svg><i class="car"></i><svg class="i24"><use href="#z7"/></svg><svg class="i24"><use href="#z8"/></svg><b></b>
        </div>
        <div class="g-lab sync-lab"><span>同步建模</span><i class="car"></i></div>
      </div>
    </div>
    <div class="grp g5">
      <svg class="i24"><use href="#x1"/></svg><svg class="i24"><use href="#x2"/></svg><svg class="i24"><use href="#x3"/></svg><svg class="i24"><use href="#x4"/></svg><svg class="i24"><use href="#x5"/></svg><svg class="i24"><use href="#x6"/></svg><svg class="i24"><use href="#x7"/></svg><svg class="i24"><use href="#x8"/></svg><svg class="i24"><use href="#x9"/></svg><svg class="i24"><use href="#x10"/></svg><svg class="i24"><use href="#x11"/></svg><svg class="i24"><use href="#x12"/></svg><svg class="i24"><use href="#x13"/></svg><svg class="i24"><use href="#x14"/></svg>
      <svg class="i24"><use href="#y1"/></svg><svg class="i24"><use href="#y2"/></svg><svg class="i24"><use href="#y3"/></svg><svg class="i24"><use href="#y4"/></svg><svg class="i24"><use href="#y5"/></svg><svg class="i24"><use href="#y6"/></svg><svg class="i24"><use href="#y7"/></svg><svg class="i24"><use href="#y8"/></svg><svg class="i24"><use href="#y9"/></svg><svg class="i24"><use href="#y10"/></svg><svg class="i24"><use href="#y11"/></svg><svg class="i24"><use href="#y12"/></svg><svg class="i24"><use href="#y13"/></svg><svg class="i24"><use href="#y14"/></svg>
    </div>
  </section>

  <section class="selbar">
    <div class="sb-menu"><svg class="sb-ic"><use href="#selico"/></svg><i class="car"></i></div>
    <div class="combo combo-a"><i class="car car-g"></i></div>
    <div class="combo combo-b"><span>整个装配</span><i class="car car-g"></i></div>
    <svg class="i20 sb-g1"><use href="#assem"/></svg>
    <svg class="i20 sb-g2"><use href="#filt"/></svg>
    <div class="sb-right"><span class="sb-box"></span><i class="car"></i></div>
  </section>

  <main class="main">
    <aside class="rail">
      <div class="ri ri-gear"><svg class="i18"><use href="#gear"/></svg></div>
      <div class="ri m26"><svg class="i24"><use href="#r-geo"/></svg></div>
      <div class="ri m17"><svg class="i24"><use href="#r-bow"/></svg></div>
      <div class="ri m18"><svg class="i24"><use href="#r-disc"/></svg></div>
      <div class="ri ri-on"><svg class="i24"><use href="#r-ops"/></svg></div>
      <div class="ri m7"><svg class="i24"><use href="#r-mesh"/></svg></div>
      <div class="ri m18"><svg class="i24"><use href="#r-mach"/></svg></div>
      <div class="ri m19"><svg class="i24"><use href="#r-books"/></svg></div>
      <div class="ri m29"><svg class="i24"><use href="#r-info"/></svg></div>
      <div class="ri m30"><svg class="i24"><use href="#r-doc"/></svg></div>
      <div class="ri m30"><svg class="i24"><use href="#r-clock"/></svg></div>
      <div class="ri m19"><svg class="i24"><use href="#r-rain"/></svg></div>
      <div class="ri m18"><svg class="i24"><use href="#r-wand"/></svg></div>
      <div class="ri m18"><svg class="i24"><use href="#r-tools"/></svg></div>
      <div class="ri m17"><svg class="i24"><use href="#r-mach2"/></svg></div>
    </aside>

    <section class="nav">
      <div class="nav-head"><span>工序导航器 - 程序顺序</span><i class="maxbox"></i></div>
      <div class="tree">
        <div class="tr th"><div>名称</div><div class="clip"><span class="cl">按</span></div><div class="clip"><span class="cl">刀</span></div><div>刀具</div></div>
        <div class="tr"><div class="nm">NC_PROGRAM</div><div></div><div></div><div></div></div>
        <div class="tr alt"><div class="nm l1"><svg class="ic-f"><use href="#folder"/></svg>未用项</div><div></div><div></div><div></div></div>
        <div class="tr"><div class="nm l1b"><i class="minus"></i><svg class="ic-b"><use href="#bulb"/></svg><svg class="ic-f"><use href="#folder"/></svg>PROGRAM</div><div></div><div></div><div></div></div>
        <div class="tr alt pur"><div class="nm l2"><svg class="ic-b"><use href="#bulb"/></svg><svg class="ic-o"><use href="#opz"/></svg>ZLEVEL_PROFILE</div><div class="mid"><svg class="ic-t"><use href="#opico"/></svg></div><div class="mid"><svg class="ic-k"><use href="#ok"/></svg></div><div>R3</div></div>
        <div class="tr"><div class="nm l2"><svg class="ic-b"><use href="#bulb"/></svg><svg class="ic-o"><use href="#opv"/></svg>VARIABLE_CONTO...</div><div></div><div class="mid"><svg class="ic-k"><use href="#ok"/></svg></div><div>R3</div></div>
        <div class="tr hl"><div class="nm l2"><svg class="ic-b"><use href="#bulb"/></svg><svg class="ic-o"><use href="#opz"/></svg><span class="hl-t">ZLEVEL_PROFILE_1</span></div><div></div><div class="mid"><svg class="ic-k"><use href="#ok"/></svg></div><div>R3</div></div>
        <div class="tr"><div></div><div></div><div></div><div></div></div>
        <div class="tr g"><div></div><div></div><div></div><div></div></div><div class="tr"><div></div><div></div><div></div><div></div></div>
        <div class="tr g"><div></div><div></div><div></div><div></div></div><div class="tr"><div></div><div></div><div></div><div></div></div>
        <div class="tr g"><div></div><div></div><div></div><div></div></div><div class="tr"><div></div><div></div><div></div><div></div></div>
        <div class="tr g"><div></div><div></div><div></div><div></div></div><div class="tr"><div></div><div></div><div></div><div></div></div>
        <div class="tr g"><div></div><div></div><div></div><div></div></div><div class="tr"><div></div><div></div><div></div><div></div></div>
        <div class="tr g"><div></div><div></div><div></div><div></div></div><div class="tr"><div></div><div></div><div></div><div></div></div>
        <div class="tr g"><div></div><div></div><div></div><div></div></div><div class="tr"><div></div><div></div><div></div><div></div></div>
        <div class="tr g"><div></div><div></div><div></div><div></div></div><div class="tr"><div></div><div></div><div></div><div></div></div>
        <div class="tr g"><div></div><div></div><div></div><div></div></div><div class="tr"><div></div><div></div><div></div><div></div></div>
        <div class="tr g"><div></div><div></div><div></div><div></div></div><div class="tr"><div></div><div></div><div></div><div></div></div>
        <div class="tr g"><div></div><div></div><div></div><div></div></div>
        <div class="hscroll"><i class="ar-l"></i><div class="thumb"><span></span></div><i class="ar-r"></i></div>
        <svg class="conn" width="60" height="145" viewBox="0 0 60 145"><path d="M9 36H18M9 36V55M28 71V132H38M28 85H38M28 108H38" fill="none" stroke="#999" stroke-dasharray="1 1"/></svg>
      </div>
      <div class="nav-split"></div>
      <div class="nsec"><span>相关性</span><svg class="chev"><use href="#chev"/></svg></div>
      <div class="nsec"><span>细节</span><svg class="chev"><use href="#chev"/></svg></div>
    </section>

    <section class="view">
      <div class="vtab"><svg class="vt-ic"><use href="#r-ops"/></svg><span>_model2.prt</span></div>
      <div class="viewport">
        <svg class="scene" viewBox="377 230 1530 793" preserveAspectRatio="none">
          <g stroke="#3a3a3a" stroke-width="1" stroke-linejoin="round">
            <polygon points="1119,318 1429,271 1729,536 1421,583" fill="#8040ff"/>
            <polygon points="1119,318 1421,583 1416,643 1116,385" fill="#46228f"/>
            <polygon points="1421,583 1729,536 1727,597 1416,643" fill="#46228f"/>
            <polygon points="1116,385 1416,643 1404,777 1108,461" fill="#b86e00"/>
            <polygon points="1416,643 1727,597 1700,897 1293,953 1307,792 1404,777" fill="#b86e00"/>
            <polygon points="1011,475 1108,461 1404,777 1307,792" fill="#ffc800"/>
            <polygon points="1011,475 1307,792 1293,953 992,688" fill="#b86e00"/>
          </g>
          <g transform="translate(1050 290) scale(.33333)" fill="none">
            <g stroke="#f0a050" stroke-width="5">
              <path d="M208 85L338 65L275 145Z"/>
              <path d="M228 115l-18 14 15 11M270 110l-25 2 15 20l-20 12h25M222 150l-18 14 15 11M265 165l-18 16 18 4M218 185l-18 14 15 11M262 210l-22 3 15-18M214 220l-18 14 15 11M258 245l-22 3 15-18M210 255l-18 14 15 11M255 280l-22 3 15-18M206 290l-18 14 15 11M252 315l-22 3 15-18M202 325l-18 14 15 11M248 350l-22 3 15-18M198 360l-18 14 15 11M244 385l-22 3 15-18M194 395l-18 14 15 11M240 420l-22 3 15-18M190 430l-18 14 15 11M236 455l-22 3 15-18M186 465l-18 14 15 11M232 490l-22 3 15-18M184 500l-18 14 15 11M234 520l-22 3 15-18"/>
            </g>
            <g stroke="#f3a868" stroke-width="5">
              <path d="M160 665L290 645L228 720Z"/>
              <path d="M188 592l-18 14 15 11M228 590l-22 3 15-18M185 628l-18 14 15 11M225 622l-22 3 15-18"/>
            </g>
            <path d="M150 162L1040 945M150 190L1048 995M143 232L1048 1025M143 262L1042 1065M136 300L1042 1095M136 330L1036 1130M130 368L1036 1160M130 398L1030 1200M126 435L1030 1230M126 465L1025 1265M122 505L1025 1298M175 528L1018 1335M215 575L1018 1365M270 650L1012 1405M292 648L1012 1435" stroke="#10f0f0" stroke-width="6"/>
            <path d="M150 160v30M143 232v30M136 300v30M130 368v30M126 435v30M1048 995v30M1042 1065v30M1036 1130v30M1030 1200v30M1025 1265v33M1018 1335v30M1012 1405v30" stroke="#10e010" stroke-width="8"/>
            <path d="M122 505L240 640M430 847L620 1052" stroke="#10e010" stroke-width="6"/>
            <path d="M1070 1065L1062 1462L772 1505" stroke="#10f010" stroke-width="7"/>
            <path d="M883 375L845 810L810 1265M1080 548L1045 960" stroke="#0000ff" stroke-width="10" stroke-dasharray="22 27"/>
            <circle cx="1047" cy="964" r="9" fill="#f0a818"/>
            <circle cx="810" cy="1266" r="8" fill="#f8c8d8"/>
          </g>
          <g class="triad">
            <path d="M444 934l26-4v34l-24-6-6-2z" fill="#d2d3d5" stroke="#b8b8ba"/>
            <path d="M444 934l10 8 16-4M454 942v20" fill="none" stroke="#b8b8ba"/>
            <path d="M444 954l26-6" stroke="#a8c8a8" stroke-width="2"/>
            <path d="M440 952l4-24" stroke="#0a28c8" stroke-width="3"/>
            <path d="M441 932l5-10 3 11z" fill="#0a28c8"/>
            <path d="M442 958l16 13" stroke="#d02828" stroke-width="3"/>
            <path d="M455 973l4-7 5 11z" fill="#d02828"/>
            <circle cx="440" cy="956" r="3.500" fill="#ddd" stroke="#888"/>
            <text x="440" y="918" class="tz">Z</text>
            <text x="459" y="980" class="tx">X</text>
          </g>
        </svg>
      </div>
    </section>
  </main>

  <footer class="status">
    <span class="st-l">指定参数</span>
    <span class="st-c">当前：ZLEVEL_PROFILE_1</span>
    <svg class="i16 st-i1"><use href="#fs"/></svg>
    <svg class="i16 st-i2" viewBox="0 0 16 16"><circle cx="8" cy="9" r="6.500" fill="#1c8ee0"/><path d="M4 1l5 1-2 5z" fill="#d82020"/><path d="M9 4l6 1-2 4z" fill="#f0d020"/><path d="M4 10l6 3-4 1z" fill="#30b040"/></svg>
  </footer>

  <div class="dialog">
    <div class="dlg-title"><svg class="i16"><use href="#gear"/></svg><span>深度轮廓铣 - [ZLEVEL_PROFILE_1]</span><b class="dlg-x">✕</b></div>
    <div class="dlg-body">
      <div class="row"><label>几何体</label><div class="sel w130"><span>MCS_MILL</span><i class="car"></i></div><button class="ib ib-f"><svg class="i24"><use href="#geom"/></svg></button><button class="ib"><svg class="i24"><use href="#wrench"/></svg></button></div>
      <div class="row"><label class="low">指定部件</label><button class="ib"><svg class="i24"><use href="#partcube"/></svg></button><button class="ib"><svg class="i24"><use href="#flash"/></svg></button></div>
      <div class="row"><label class="low">指定检查</label><button class="ib"><svg class="i24"><use href="#checkred"/></svg></button><button class="ib off"><svg class="i24"><use href="#flash-g"/></svg></button></div>
      <div class="row"><label class="low">指定切削区域</label><button class="ib"><svg class="i24"><use href="#area"/></svg></button><button class="ib"><svg class="i24"><use href="#flash"/></svg></button></div>
      <div class="row"><label class="low">指定修剪边界</label><button class="ib"><svg class="i24"><use href="#trim"/></svg></button><button class="ib off"><svg class="i24"><use href="#flash-g"/></svg></button></div>
      <hr class="div">
      <div class="row"><label>刀具</label><div class="sel w130"><span class="clip-t">R3 (铣刀-球头铣</span><i class="car"></i></div><button class="ib ib-f"><svg class="i24"><use href="#toolnew"/></svg></button><button class="ib"><svg class="i24"><use href="#tooledit"/></svg></button></div>
      <div class="row"><label>陡峭空间范围</label><div class="sel w152"><span>无</span><i class="car"></i></div></div>
      <div class="row"><label>合并距离</label><div class="num"><span class="num-sel">3.0000</span></div><div class="sel unit"><span>mm</span><i class="car"></i></div></div>
      <div class="row"><label>最小切削长度</label><div class="num">1.0000</div><div class="sel unit"><span>mm</span><i class="car"></i></div></div>
      <div class="row"><label>公共每刀切削深度</label><div class="sel w152"><span>恒定</span><i class="car"></i></div></div>
      <div class="row"><label>最大距离</label><div class="num">2.0000</div><div class="sel unit"><span>mm</span><i class="car"></i></div></div>
      <div class="row"><label class="mid">切削层</label><button class="ib"><svg class="i24"><use href="#layers"/></svg></button></div>
      <div class="row"><label class="mid">切削参数</label><button class="ib"><svg class="i24"><use href="#cutparam"/></svg></button></div>
      <div class="row"><label class="mid">非切削移动</label><button class="ib"><svg class="i24"><use href="#noncut"/></svg></button></div>
      <div class="row"><label class="mid">进给率和速度</label><button class="ib"><svg class="i24"><use href="#feed"/></svg></button></div>
      <hr class="div">
      <div class="row"><label>切削方向</label><div class="sel w152"><span>混合</span><i class="car"></i></div></div>
      <div class="chk"><i></i><span>在边上延伸</span></div>
      <div class="chk"><i></i><span>使底面余量与侧面余量一致</span></div>
      <div class="row"><label>部件侧面余量</label><div class="num">0.0000</div><button class="lk"><svg class="lk-c"><use href="#lock"/></svg></button></div>
      <div class="row"><label>部件底面余量</label><div class="num">0.0400</div></div>
      <div class="row"><label>光顺</label><div class="sel w152"><span>None</span><i class="car"></i></div></div>
      <div class="row"><label>参考刀具</label><div class="sel w130"><span>NONE</span><i class="car"></i></div><button class="ib ib-f"><svg class="i24"><use href="#toolnew"/></svg></button><button class="ib off"><svg class="i24"><use href="#wrench-g"/></svg></button></div>
      <div class="row"><label>切削进给</label><div class="num num-w">3500.000</div><div class="sel unit2"><span>mmpm</span><i class="car"></i></div><button class="lk lk-2"><svg class="lk-o"><use href="#unlock"/></svg></button></div>
      <div class="row"><label>层到层</label><div class="sel w152"><span>直接对部件进刀</span><i class="car"></i></div></div>
      <div class="sect"><span>机床控制</span><svg class="chev"><use href="#chev"/></svg></div>
      <div class="sect s2"><span>选项</span><svg class="chev"><use href="#chev"/></svg></div>
      <div class="acts">
        <button class="ib"><svg class="i24"><use href="#op"/></svg></button>
        <button class="ib"><svg class="i24"><use href="#sarrow"/></svg></button>
        <button class="ib"><svg class="i24"><use href="#verify"/></svg></button>
        <button class="ib"><svg class="i24"><use href="#copy"/></svg></button>
      </div>
      <div class="okrow"><button class="b-ok">确定</button><button class="b-no">取消</button></div>
    </div>
  </div>

  <div class="wm">
    <svg class="wm-logo" viewBox="0 0 72 82">
      <polygon points="36,0 72,20 72,62 36,82 0,62 0,20" fill="#dbe6ee"/>
      <path d="M36 0L54 10C55 24 48 28 36 23L18 33L0 30V20z" fill="#c6e3f5"/>
      <path d="M36 0L72 20V50C66 38 60 30 49 31L36 23C48 20 48 8 36 0z" fill="#8dd0f2"/>
      <path d="M72 26V62L54 72C60 60 60 48 54 41V31C62 32 68 30 72 26z" fill="#75c2ea"/>
      <path d="M72 50C68 64 48 70 36 59L18 49V62L36 82L54 72L72 62z" fill="#74c4ee"/>
      <path d="M18 49C18 62 24 76 36 82L0 62V36C4 28 10 28 18 33z" fill="#a6d7f2"/>
      <path d="M0 20L36 0C24 4 8 14 0 42z" fill="#b5dcf3"/>
      <polygon points="36,23 54,33 54,51 36,61 18,51 18,33" fill="#dde6ec"/>
      <polygon points="36,26 52,35 36,44 20,35" fill="#c5e4f6"/>
      <polygon points="20,35 36,44 36,60 20,50" fill="#a5d5f2"/>
      <polygon points="52,35 36,44 36,60 52,50" fill="#78c2ea"/>
    </svg>
    <div class="wm-t"><div class="wm-a">3D世界网</div><div class="wm-b">WWW.3DSJW.COM</div></div>
  </div>
</div>
</body>
</html>
```
FILE: styles.css
```css
* { box-sizing: border-box; }
html, body { margin: 0; padding: 0; width: 1907px; height: 1044px; overflow: hidden; }
body { background: #fff; color: #222; font-family: "Noto Sans", "Noto Sans CJK SC", sans-serif; font-size: 15px; }
.defs { position: absolute; }
svg { display: block; flex: none; }
.help-t, .info-t, .y3-t, .z8-t { font-family: "Liberation Sans", sans-serif; font-weight: 700; text-anchor: middle; }
.help-t { font-size: 11px; fill: #fff; }
.info-t { font-size: 13px; fill: #fff; }
.y3-t { font-size: 10px; fill: #555; }
.z8-t { font-size: 14px; fill: #222; font-family: "Liberation Serif", serif; }
.i14 { width: 14px; height: 14px; }
.i16 { width: 16px; height: 16px; }
.i18 { width: 18px; height: 18px; }
.i20 { width: 20px; height: 20px; }
.i22 { width: 22px; height: 22px; }
.i24 { width: 24px; height: 24px; }
.i48 { width: 48px; height: 48px; }
.car { display: block; flex: none; width: 0; height: 0; border-left: 4.5px solid transparent; border-right: 4.5px solid transparent; border-top: 5px solid #222; }
.car-g { border-top-color: #aaa; }
.car-bar { position: relative; margin-left: 5px; }
.car-bar::before { content: ""; position: absolute; left: -4px; top: -8px; width: 8px; height: 1px; background: #222; }

.app { position: relative; width: 1907px; height: 1044px; display: flex; flex-direction: column; }

/* title bar */
.titlebar { height: 30px; display: flex; align-items: center; flex: none; }
.quick { width: 1046px; display: flex; align-items: center; height: 30px; flex: none; }
.q-logo { width: 47px; height: 24px; padding-left: 4px; font: 700 25px/24px "Liberation Sans", sans-serif; color: #8494a6; border-right: 1px solid #ddd; }
.qg { height: 24px; display: flex; align-items: center; border-right: 1px solid #ddd; }
.qg-a { width: 55px; padding-left: 9px; gap: 6px; }
.qg-b { width: 29px; padding-left: 6px; }
.qg-c { width: 67px; padding-left: 6px; gap: 6px; }
.qg-f { width: 44px; padding-left: 6px; gap: 6px; }
.qg-g { border: 0; padding-left: 6px; gap: 5px; font-size: 14px; }
.q-dim { color: #bbb; width: 56px; }
.q-win { margin-left: 1px; }
.q-txt { margin-left: -1px; color: #111; }
.apptitle { width: 126px; font-size: 16px; color: #111; white-space: nowrap; text-align: center; line-height: 30px; }
.win { margin-left: auto; width: 161px; display: flex; align-items: center; height: 30px; flex: none; }
.siemens { font: 700 15.300px/30px "Liberation Sans", sans-serif; color: #009999; width: 99px; padding-top: 2px; }
.w-min { width: 8px; height: 2px; background: #555; margin-top: 8px; }
.w-max { width: 12px; height: 11px; border: 1.500px solid #555; margin-left: 18px; }
.w-close { margin-left: 15px; font-size: 13px; color: #555; font-family: "DejaVu Sans", sans-serif; }

/* tabs */
.tabs { height: 32px; background: #dcdcdc; display: flex; align-items: stretch; flex: none; }
.tab-file { width: 91px; background: #55a0b9; color: #fff; font-size: 16px; text-align: center; line-height: 30px; }
.tab-on { width: 58px; margin-left: 2px; background: #fff; color: #0a7399; font-size: 16px; text-align: center; line-height: 32px; border-top: 1px solid #ccc; }
.tab-off { margin-left: 13px; font-size: 16px; line-height: 32px; color: #222; }
.tabs-r { margin-left: auto; width: 290px; flex: none; display: flex; align-items: center; }
.search { width: 156px; height: 24px; background: #fff; border: 1px solid #aaa; display: flex; align-items: center; justify-content: space-between; padding: 0 4px 0 1px; font-size: 14px; color: #bbb; }
.tr1 { margin-left: 12px; }
.collapse { width: 9px; height: 9px; margin-left: 12px; border-left: 1.500px solid #222; border-top: 1.500px solid #222; transform: rotate(45deg); margin-top: 5px; }
.tr2 { margin-left: 14px; }
.tr3 { margin-left: 10px; }
.tut { margin-left: 5px; white-space: nowrap; font-size: 15px; flex: none; }

/* ribbon */
.ribbon { height: 106px; flex: none; display: flex; padding-top: 5px; border-bottom: 1px solid #ddd; }
.grp { height: 96px; border-right: 1px solid #ddd; flex: none; display: flex; }
.g-lab { display: flex; align-items: center; justify-content: space-between; font-size: 14px; color: #0a7399; height: 20px; }
.g1 { width: 63px; flex-direction: column; justify-content: space-between; }
.g-body { display: flex; align-items: flex-start; gap: 5px; padding: 8px 0 0 14px; }
.g-body .car { margin-top: 9px; }
.g1 .g-lab { padding: 0 9px 0 7px; margin-bottom: -3px; }
.g2 { width: 188px; padding-left: 3px; align-items: flex-start; }
.g2-small { width: 70px; display: grid; grid-template-columns: 35px 35px; grid-auto-rows: 37px; justify-items: center; align-items: center; }
.big1 { margin: 13px 0 0 2px; }
.big2 { margin: 13px 0 0 9px; }
.g3 { width: 134px; flex-direction: column; justify-content: space-between; }
.g3-grid { display: grid; grid-template-columns: 46px 41px 46px; grid-template-rows: 16px 32px 26px; }
.c { display: flex; align-items: center; align-self: end; gap: 3px; }
.ca { padding-left: 9px; }
.cb { padding-left: 3px; }
.cc { padding-left: 2px; }
.r1a { margin: 0 3px 0 2px; }
.r1b { margin: 0 3px 0 2px; }
.r1c { margin-left: 3px; }
.sel-ic { width: 23px; height: 22px; background: #c5e3ea; border: 1px solid #b0d4dc; display: flex; align-items: center; justify-content: center; }
.g3-lab { padding: 0 7px 0 42px; margin-bottom: -3px; }
.g4 { width: 670px; padding-left: 14px; gap: 12px; }
.pbtn { width: 28px; display: flex; flex-direction: column; align-items: center; padding-top: 6px; font-size: 14px; }
.pbtn span { margin-top: 11px; white-space: nowrap; line-height: 20px; }
.i-play { width: 14px; height: 20px; }
.sync { margin-left: auto; width: 204px; display: flex; flex-direction: column; justify-content: space-between; }
.sync-grid { display: grid; grid-template-columns: 24px 26px 22px 26px 22px 26px 40px 8px; grid-auto-rows: 37px; justify-items: center; align-items: center; }
.sync-lab { padding: 0 5px 0 12px; margin-bottom: -3px; }
.g5 { width: 470px; display: grid; grid-template-columns: repeat(14, 33px); grid-auto-rows: 37px; justify-items: center; align-items: center; padding: 0 0 0 4px; }

/* selection bar */
.selbar { height: 36px; flex: none; display: flex; align-items: center; border-bottom: 1px solid #aaa; position: relative; }
.sb-menu { width: 44px; height: 30px; display: flex; align-items: center; gap: 4px; padding-left: 8px; border-right: 1px solid #ddd; }
.sb-ic { width: 20px; height: 18px; }
.combo { height: 23px; border: 1px solid #aaa; background: #fff; display: flex; align-items: center; justify-content: space-between; padding: 0 8px 0 3px; font-size: 14px; color: #bbb; }
.combo-a { width: 166px; margin-left: 12px; justify-content: flex-end; }
.combo-b { width: 176px; margin-left: 10px; }
.sb-g1 { margin-left: 7px; }
.sb-g2 { margin-left: 7px; }
.sb-right { margin-left: 388px; width: 42px; height: 30px; display: flex; align-items: center; gap: 7px; border-right: 1px solid #ddd; }
.sb-box { width: 16px; height: 16px; background: #f0f0f0; border: 1px solid #333; }

/* main */
.main { height: 819px; flex: none; display: flex; }
.rail { width: 33px; flex: none; background: #dcdcdc; border-right: 1px solid #999; display: flex; flex-direction: column; align-items: stretch; padding-top: 1px; }
.ri { height: 24px; display: flex; align-items: center; justify-content: center; padding-right: 1px; flex: none; }
.ri-gear { color: #333; }
.m7 { margin-top: 7px; }
.m17 { margin-top: 17px; }
.m18 { margin-top: 18px; }
.m19 { margin-top: 19px; }
.m26 { margin-top: 26px; }
.m29 { margin-top: 29px; }
.m30 { margin-top: 30px; }
.ri-on { height: 46px; margin: 8px -1px 0 2px; background: #fff; border-top: 1px solid #bbb; border-bottom: 1px solid #bbb; position: relative; }

.nav { width: 344px; flex: none; display: flex; flex-direction: column; border-right: 1px solid #bbb; padding: 0 9px 0 5px; }
.nav-head { height: 32px; flex: none; display: flex; align-items: center; justify-content: space-between; padding: 0 7px 0 4px; font-size: 15px; color: #222; }
.maxbox { width: 14px; height: 12px; border: 1px solid #222; border-top-width: 2px; display: block; margin-top: 3px; }
.tree { position: relative; flex: none; border: 1px solid #ddd; padding: 0 1px; height: 720px; }
.tr { display: grid; grid-template-columns: 222px 20px 22px 62px; height: 24px; border-bottom: 1px solid #eee; align-items: stretch; font-size: 15.500px; color: #222; }
.tr > div { border-right: 1px solid #eee; white-space: nowrap; overflow: hidden; line-height: 23px; padding-left: 5px; }
.tr > div:first-child { border-right: 1px solid #000; }
.tr > div:last-child { border-right: 0; }
.th { background: #f0f0f0; border-bottom: 1px solid #ddd; }
.th > div { color: #444; border-right-color: #ddd !important; }
.th > div:first-child { padding-left: 6px; }
.clip { padding-left: 5px !important; }
.cl { display: block; width: 9px; overflow: hidden; }
.alt { background: #f9f9f9; }
.nm { display: flex; align-items: center; padding-left: 4px !important; }
.l1 { padding-left: 20px !important; gap: 4px; }
.l1b { padding-left: 4px !important; }
.l2 { padding-left: 43px !important; }
.minus { width: 10px; height: 10px; border: 1px solid #bbb; background: #fff; margin-right: 8px; position: relative; }
.minus::after { content: ""; position: absolute; left: 1px; top: 3px; width: 6px; height: 1px; background: #222; }
.ic-f { width: 15px; height: 14px; }
.ic-b { width: 8px; height: 18px; }
.l1b .ic-f { margin: 0 4px 0 5px; }
.l1b .ic-b { margin-left: 1px; }
.ic-o { width: 14px; height: 16px; margin: 0 4px 0 4px; }
.ic-t { width: 8px; height: 14px; }
.ic-k { width: 13px; height: 13px; }
.mid { display: flex; align-items: center; justify-content: center; padding-left: 0 !important; }
.pur { color: #7b3fd0; }
.hl { background: linear-gradient(90deg, #fff 70px, #8bc0d2 70px); }
.hl > div { border-right-color: #d5e6ec; }
.hl-t { background: #8bc0d2; padding: 0 2px 0 0; }
.g { background: #f9f9f9; }
.hscroll { height: 19px; margin-top: 1px; background: #f0f0f0; display: flex; align-items: center; padding-left: 7px; position: relative; }
.ar-l { width: 0; height: 0; border-top: 4px solid transparent; border-bottom: 4px solid transparent; border-right: 5px solid #555; }
.thumb { width: 133px; height: 17px; margin-left: 9px; border: 1px solid #aaa; border-radius: 2px; background: linear-gradient(#f0f0f0, #c4c4c4); display: flex; align-items: center; justify-content: center; }
.thumb span { width: 9px; height: 7px; border-left: 1px solid #666; border-right: 1px solid #666; position: relative; }
.ar-r { width: 0; height: 0; border-top: 4px solid transparent; border-bottom: 4px solid transparent; border-left: 5px solid #555; margin-left: 154px; }
.conn { position: absolute; left: 0; top: 25px; }
.nav-split { height: 4px; flex: none; background: #ddd; border: 1px solid #aaa; margin-top: 1px; }
.nsec { height: 28px; flex: none; display: flex; align-items: center; justify-content: space-between; padding: 1px 5px 0 7px; font-size: 18px; color: #1a7fa5; border-bottom: 2px solid #ccc; background: #fff; }
.chev { width: 16px; height: 12px; }

.view { flex: 1; display: flex; flex-direction: column; min-width: 0; }
.vtab { height: 24px; flex: none; display: flex; align-items: center; padding-left: 8px; font-size: 14.500px; gap: 5px; }
.vt-ic { width: 14px; height: 14px; }
.viewport { flex: 1; border-top: 2px solid #55a0b9; background: linear-gradient(#b9babc, #e7e8ea); overflow: hidden; }
.scene { width: 1530px; height: 793px; }
.tz, .tx { font: 11px "Liberation Sans", sans-serif; }
.tz { fill: #2a50e0; }
.tx { fill: #d86060; }

/* status */
.status { flex: 1; border-top: 2px solid #aaa; display: flex; align-items: center; background: #fff; font-weight: 700; font-size: 14.500px; }
.st-l { margin-left: 3px; width: 55px; white-space: nowrap; line-height: 18px; color: #111; font-size: 14px; }
.st-c { margin-left: 858px; width: 172px; white-space: nowrap; color: #111; }
.st-i1 { margin-left: 762px; }
.st-i2 { margin-left: 11px; }

/* dialog */
.dialog { position: absolute; left: 470px; top: 75px; width: 380px; height: 940px; background: #f0f0f0; border: 1px solid #dcdcdc; border-top: 0; color: #444; }
.dlg-title { height: 27px; background: #55a0b9; color: #fff; display: flex; align-items: center; margin: 0 -1px; padding: 0 9px 0 8px; font-size: 18px; letter-spacing: .2px; white-space: nowrap; gap: 7px; }
.dlg-title .i16 { color: #fff; }
.dlg-x { margin-left: auto; font-size: 18px; line-height: 27px; font-family: "DejaVu Sans", sans-serif; font-weight: 700; }
.dlg-body { display: flex; flex-direction: column; gap: 2px; padding: 8px 9px 0 9px; }
.row { display: flex; align-items: flex-start; flex: none; }
.row > label { margin-right: auto; height: 26px; line-height: 28px; white-space: nowrap; font-size: 15px; color: #444; }
.row > label.low { line-height: 40px; height: 32px; }
.row > label.mid { line-height: 32px; height: 32px; }
.div { height: 2px; width: 100%; margin: 0; border: 0; background: #ddd; flex: none; }
.sel { height: 28px; border: 1px solid #aaa; background: #fff; display: flex; align-items: center; justify-content: space-between; padding: 0 6px 0 5px; color: #222; font-size: 15.300px; overflow: hidden; flex: none; }
.sel > span { white-space: nowrap; overflow: hidden; }
.w130 { width: 131px; }
.w152 { width: 152px; }
.clip-t { width: 103px; }
.unit { width: 71px; margin-left: 2px; font-size: 16px; }
.unit span { padding-top: 3px; }
.unit2 { width: 81px; margin-left: 2px; font-size: 16px; padding-left: 4px; }
.unit2 span { padding-top: 3px; }
.num { width: 90px; height: 26px; border: 1px solid #aaa; background: #fff; text-align: right; padding: 0 4px 0 0; font: 17px/23px "Liberation Mono", monospace; letter-spacing: -.2px; color: #444; flex: none; }
.num-w { padding-right: 3px; letter-spacing: -.3px; }
.num-sel { display: block; margin: 2px -3px 0 4px; padding-right: 1px; height: 20px; line-height: 19px; background: #3399ff; color: #fff; }
.ib { width: 32px; height: 32px; border: 1px solid #aaa; background: #eee; margin: 0 0 0 2px; padding: 0; display: flex; align-items: center; justify-content: center; flex: none; }
.ib-f { margin-left: 3px; }
.ib.off { border-color: #ddd; }
.lk { width: 24px; height: 24px; margin: 0 0 0 2px; padding: 0; border: 1px solid #bbb; background: #eee; display: flex; align-items: center; justify-content: center; flex: none; }
.lk-2 { margin-left: 2px; }
.lk-c { width: 13px; height: 16px; }
.lk-o { width: 19px; height: 17px; }
.chk { display: flex; align-items: center; gap: 4px; height: 24px; flex: none; font-size: 15px; }
.chk i { width: 18px; height: 18px; border: 1px solid #999; background: linear-gradient(135deg, #ddd, #f4f4f4); box-shadow: inset 0 0 0 1px #fff; }
.sect { height: 28px; flex: none; margin-top: -2px; background: #fff; border-bottom: 2px solid #ccc; display: flex; align-items: center; justify-content: space-between; padding: 0 4px 0 7px; font-size: 18px; color: #1a7fa5; }
.s2 { margin-top: 1px; }
.acts { display: flex; justify-content: center; margin-top: 3px; }
.acts .ib:first-child { margin-left: 0; }
.okrow { display: flex; justify-content: flex-end; gap: 5px; padding-right: 6px; margin-top: 10px; }
.okrow button { width: 60px; height: 28px; font: 15px "Noto Sans CJK SC", sans-serif; padding: 0; }
.b-ok { background: #6fb2c9; color: #fff; border: 0; }
.b-no { background: #ddd; color: #222; border: 1px solid #aaa; }

/* watermark */
.wm { position: absolute; left: 1624px; top: 949px; display: flex; gap: 8px; }
.wm-logo { width: 72px; height: 82px; }
.wm-t { padding-top: 8px; }
.wm-a { font: 700 42px/46px "Liberation Sans", "Noto Sans CJK SC", sans-serif; color: #f0f1f3; white-space: nowrap; }
.wm-b { font: 700 13px/14px "Liberation Sans", sans-serif; color: #f0f1f3; letter-spacing: 3.300px; white-space: nowrap; margin-top: 4px; }
```
